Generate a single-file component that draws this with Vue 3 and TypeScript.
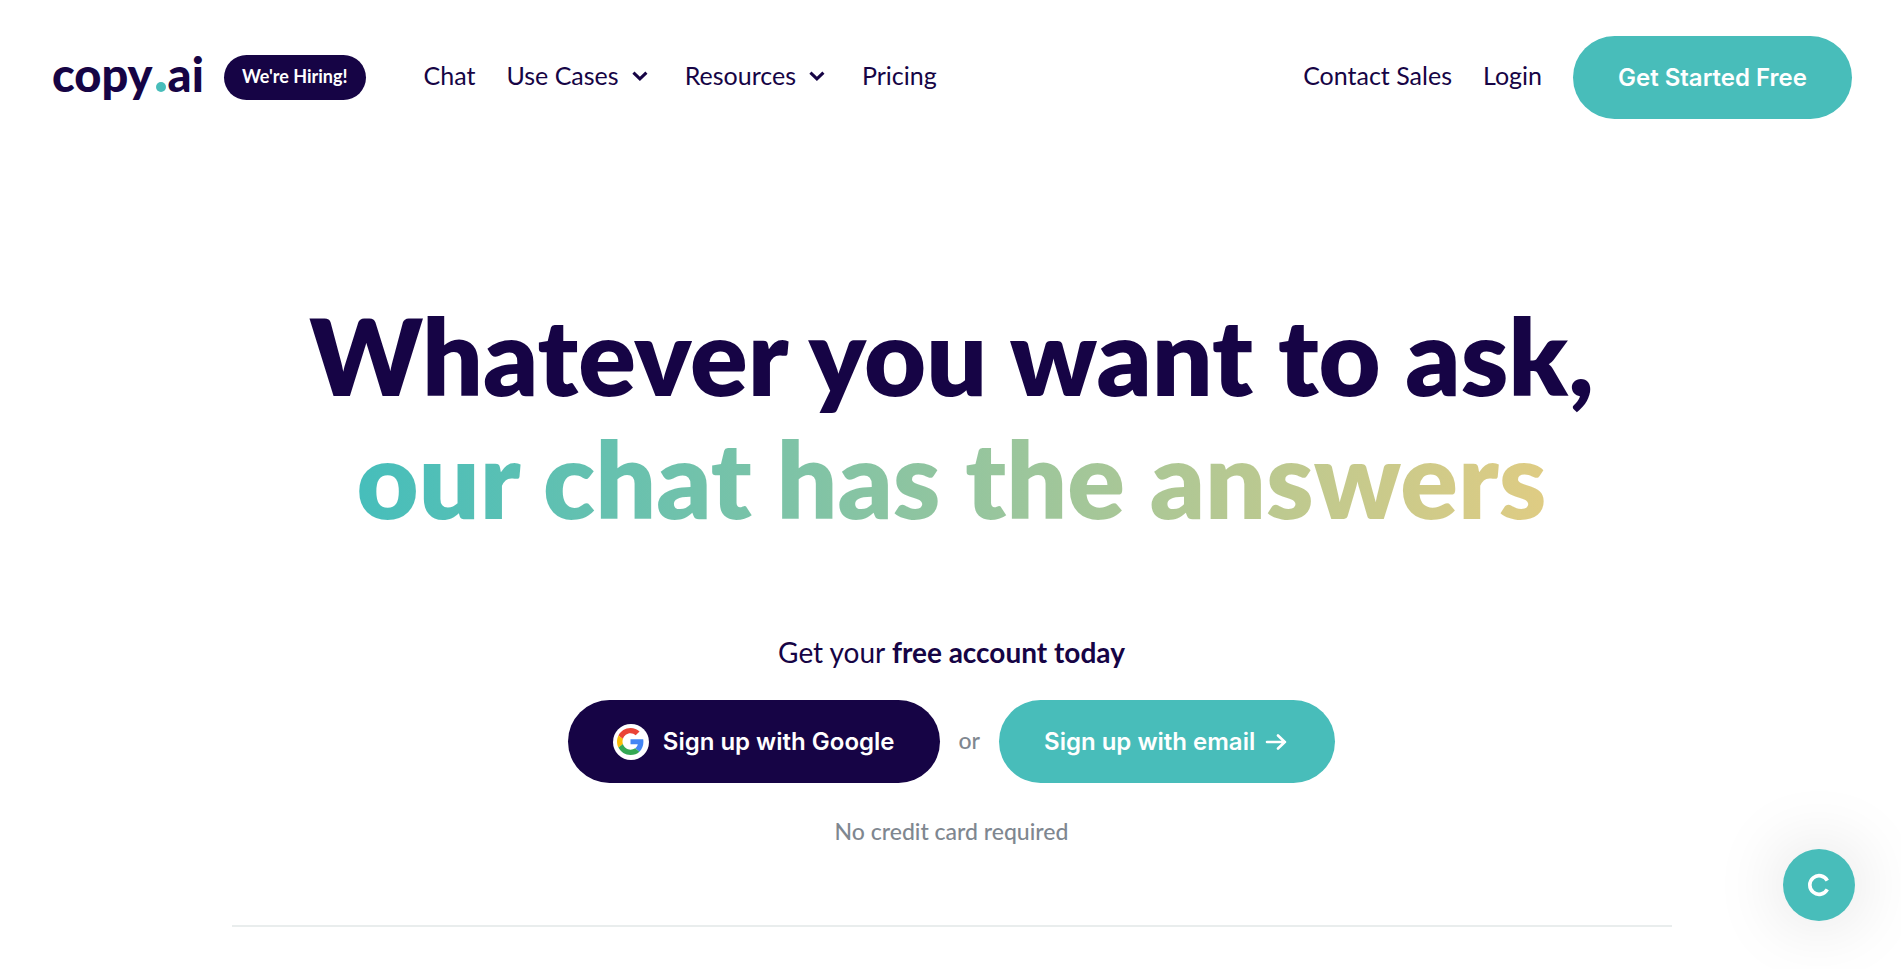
<script setup lang="ts">
interface NavItem {
  label: string
  menu: boolean
}

const navItems: NavItem[] = [
  { label: 'Chat', menu: false },
  { label: 'Use Cases', menu: true },
  { label: 'Resources', menu: true },
  { label: 'Pricing', menu: false },
]
</script>

<template>
  <div class="page">
    <header class="header">
      <a class="logo" href="#" aria-label="copy.ai">copy<span class="logo-dot"></span>ai</a>
      <a class="hiring" href="#">We're Hiring!</a>
      <nav class="nav" aria-label="Main">
        <template v-for="item in navItems" :key="item.label">
          <button v-if="item.menu" class="nav-item nav-menu" type="button">
            {{ item.label }}
            <svg class="chevron" viewBox="0 0 24 24" aria-hidden="true">
              <path d="M5 9.800 11 15.600l6-5.800" />
            </svg>
          </button>
          <a v-else class="nav-item" href="#">{{ item.label }}</a>
        </template>
      </nav>
      <div class="account">
        <a class="nav-item" href="#">Contact Sales</a>
        <a class="nav-item" href="#">Login</a>
        <a class="cta cta-teal" href="#">Get Started Free</a>
      </div>
    </header>

    <main class="hero">
      <h1 class="title">
        <span class="title-line">Whatever you want to ask,</span>
        <span class="title-line title-gradient">our chat has the answers</span>
      </h1>
      <p class="subtitle">Get your <strong>free account today</strong></p>
      <div class="signup">
        <button class="cta cta-dark" type="button">
          <span class="google">
            <svg viewBox="0 0 48 48" aria-hidden="true">
              <path fill="#EA4335" d="M24 9.500c3.540 0 6.710 1.220 9.210 3.600l6.850-6.850C35.900 2.380 30.470 0 24 0 14.620 0 6.510 5.380 2.560 13.220l7.980 6.190C12.430 13.720 17.740 9.500 24 9.500z" />
              <path fill="#4285F4" d="M46.980 24.550c0-1.570-.15-3.090-.38-4.550H24v9.020h12.940c-.58 2.960-2.260 5.480-4.780 7.180l7.730 6c4.510-4.180 7.090-10.360 7.090-17.650z" />
              <path fill="#FBBC05" d="M10.530 28.590c-.48-1.450-.76-2.990-.76-4.590s.27-3.140.76-4.590l-7.980-6.190C.92 16.460 0 20.120 0 24c0 3.880.92 7.540 2.560 10.780l7.970-6.190z" />
              <path fill="#34A853" d="M24 48c6.480 0 11.930-2.130 15.890-5.810l-7.730-6c-2.150 1.450-4.920 2.300-8.160 2.300-6.260 0-11.570-4.220-13.470-9.910l-7.980 6.190C6.510 42.620 14.620 48 24 48z" />
            </svg>
          </span>
          Sign up with Google
        </button>
        <span class="or">or</span>
        <button class="cta cta-teal cta-email" type="button">
          Sign up with email
          <svg class="arrow" viewBox="0 0 26 24" aria-hidden="true">
            <path d="M3 12h18M14 5.500 20.800 12 14 18.500" />
          </svg>
        </button>
      </div>
      <p class="note">No credit card required</p>
      <hr class="divider" />
    </main>

    <button class="chat" type="button" aria-label="Open chat">
      <svg viewBox="0 0 24 24" aria-hidden="true">
        <path d="M20.300 7.600A9.300 9.300 0 1 0 20.300 16.400" />
      </svg>
    </button>
  </div>
</template>

<style>
body {
  background: #fff;
}
</style>

<style scoped>
.page {
  --ink: #160445;
  --teal: #48bdba;
  color: var(--ink);
  font-family: Lato, "Liberation Sans", sans-serif;
}

a {
  color: inherit;
  text-decoration: none;
}

button {
  border: 0;
  padding: 0;
  background: none;
  color: inherit;
  font-family: inherit;
  cursor: pointer;
}

.header {
  display: flex;
  align-items: center;
  padding: 36px 49px 36px 52px;
}

.logo {
  display: flex;
  align-items: baseline;
  padding-bottom: 8px;
  font-size: 47px;
  font-weight: 900;
  line-height: 48px;
}

.logo-dot {
  width: 10px;
  height: 10px;
  margin: 0 2px 0 3px;
  border-radius: 50%;
  background: var(--teal);
}

.hiring {
  margin-left: 20px;
  padding: 0 18px 2px;
  border-radius: 23px;
  background: var(--ink);
  color: #fff;
  font-size: 18px;
  font-weight: 700;
  line-height: 43px;
  white-space: nowrap;
}

.nav,
.account {
  display: flex;
  align-items: center;
  gap: 31px;
}

.nav {
  margin-left: 58px;
}

.account {
  margin-left: auto;
}

.nav-item {
  padding-bottom: 5px;
  font-size: 25px;
  line-height: 32px;
  white-space: nowrap;
}

.nav-menu {
  display: flex;
  align-items: center;
  gap: 9px;
}

.chevron {
  width: 26px;
  height: 26px;
  fill: none;
  stroke: currentColor;
  stroke-width: 2.8;
}

.cta {
  display: flex;
  align-items: center;
  height: 83px;
  padding: 0 45px;
  border-radius: 42px;
  color: #fff;
  font-family: Inter, "Liberation Sans", sans-serif;
  font-size: 24px;
  font-weight: 600;
  line-height: 32px;
  white-space: nowrap;
}

.cta-teal {
  background: var(--teal);
}

.cta-dark {
  gap: 14px;
  background: var(--ink);
}

.cta-email {
  gap: 9px;
}

.google {
  display: flex;
  align-items: center;
  justify-content: center;
  width: 36px;
  height: 36px;
  border-radius: 50%;
  background: #fff;
}

.google svg {
  width: 27px;
  height: 27px;
}

.arrow {
  width: 26px;
  height: 24px;
  fill: none;
  stroke: currentColor;
  stroke-width: 2.6;
  stroke-linecap: round;
  stroke-linejoin: round;
}

.hero {
  display: flex;
  flex-direction: column;
  align-items: center;
  padding: 138px 0 40px 2px;
}

.title {
  display: flex;
  flex-direction: column;
  align-items: center;
  margin: 0;
  font-size: 107px;
  font-weight: 800;
  line-height: 123px;
  text-align: center;
}

.title-gradient {
  background: linear-gradient(90deg, #46bebb, #dfcc83);
  background-clip: text;
  color: transparent;
}

.subtitle {
  margin: 93px 0 28px;
  font-size: 28px;
  line-height: 40px;
}

.signup {
  display: flex;
  align-items: center;
  gap: 19px;
}

.or,
.note {
  color: #7f8790;
  font-size: 23px;
  font-weight: 500;
  line-height: 32px;
}

.or {
  padding-bottom: 4px;
}

.note {
  margin: 32px 0 78px;
}

.divider {
  width: 100%;
  max-width: 1440px;
  height: 2px;
  margin: 0;
  border: 0;
  background: #e9eded;
}

.chat {
  position: fixed;
  right: 46px;
  bottom: 48px;
  display: flex;
  align-items: center;
  justify-content: center;
  width: 72px;
  height: 72px;
  border-radius: 50%;
  background: var(--teal);
  box-shadow: 0 0 72px rgba(0, 0, 0, 0.15);
}

.chat svg {
  width: 24px;
  height: 24px;
  fill: none;
  stroke: #fff;
  stroke-width: 3.6;
}
</style>
